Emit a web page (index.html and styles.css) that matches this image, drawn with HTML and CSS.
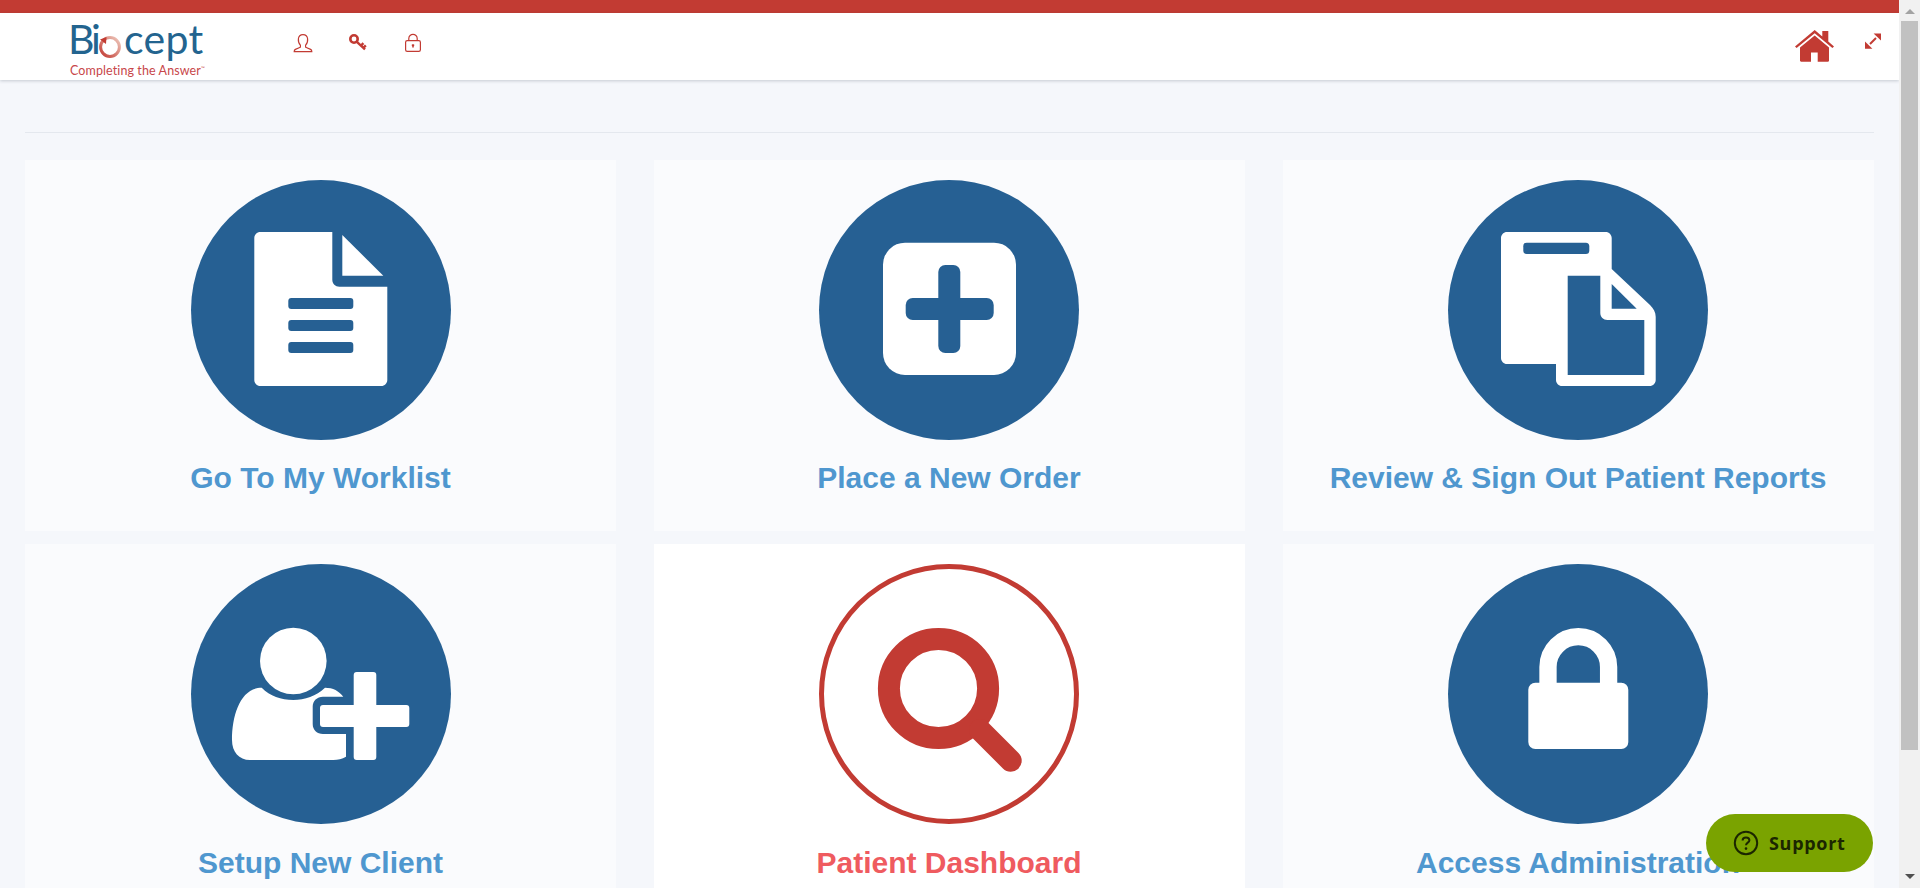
FILE: index.html
```html
<!DOCTYPE html>
<html>
  <head>
    <title>Biocept</title>
    <meta name="viewport" content="width=device-width, initial-scale=1" />
    <link rel="stylesheet" href="styles.css">
  </head>
  <body>
    <div class="page">
      <div class="top-strip"></div>
      <header class="header">
        <a class="logo" href="#">
          <span class="logo-name"><span class="logo-bi">Bi</span><svg class="logo-o" viewBox="0 0 22 22">
              <defs>
                <linearGradient id="ring" x1="0" y1="1" x2="1" y2="0">
                  <stop offset="0" stop-color="#c23b33" />
                  <stop offset="1" stop-color="#eec9bd" />
                </linearGradient>
              </defs>
              <circle cx="11" cy="11" r="9.4" fill="none" stroke="url(#ring)" stroke-width="3" />
              <path d="M1 3.5 L7.5 1 L7 8 Z" fill="#c23b33" />
            </svg><span class="logo-cept">cept</span></span>
          <span class="logo-tag">Completing the Answer<sup>™</sup></span>
        </a>
        <nav class="tools">
          <a href="#" class="tool">
            <svg viewBox="0 0 20 20" width="20" height="20" fill="none" stroke="#c23b33" stroke-width="1.2">
              <path d="M7.4 12.2 C5.6 10.4 5.2 7.8 5.4 5.8 C5.7 3 7.6 1.6 10 1.6 C12.4 1.6 14.3 3 14.6 5.8 C14.8 7.8 14.4 10.4 12.6 12.2 L12.6 14.2 L17.6 16.4 C18.6 16.9 18.8 17.6 18.8 18.6 L1.2 18.6 C1.2 17.6 1.4 16.9 2.4 16.4 L7.4 14.2 Z" />
            </svg>
          </a>
          <a href="#" class="tool">
            <svg viewBox="0 0 20 20" width="20" height="20" fill="none" stroke="#c23b33">
              <circle cx="6" cy="6" r="3.7" stroke-width="2.6" />
              <path d="M8.6 8.6 L17 16.4 M13 12.6 L15.4 10.2 M15.4 14.8 L17.8 12.4" stroke-width="2.4" />
            </svg>
          </a>
          <a href="#" class="tool">
            <svg viewBox="0 0 20 20" width="20" height="20" fill="none" stroke="#c23b33" stroke-width="1.2">
              <rect x="2.6" y="7.6" width="14.8" height="10.8" rx="1.6" />
              <path d="M5.8 7.6 V5.4 C5.8 3 7.8 1.4 10 1.4 C12.2 1.4 14.2 3 14.2 5.4 V7.6" />
              <path d="M10 11.2 V14.6 M8.8 12.2 H11.2" stroke-width="1.6" />
            </svg>
          </a>
        </nav>
        <a href="#" class="home">
          <svg viewBox="0 0 39 32" width="39" height="32" fill="#c23b33">
            <path d="M19.7 0 L27.3 6.4 V1 H33.3 V11.5 L39 16.4 L37.4 18 L19.7 3.2 L1.6 18 L0 16.4 Z" />
            <path d="M19.7 5.6 L34 17.6 V30.6 C34 31.4 33.6 31.8 32.8 31.8 H22.7 V22.4 H16 V31.8 H6.2 C5.4 31.8 5 31.4 5 30.6 V17.6 Z" />
          </svg>
        </a>
        <a href="#" class="expand">
          <svg viewBox="0 0 16 16" width="16" height="16" fill="#c23b33">
            <path d="M8.6 0.4 H16 V7.6 Z" />
            <path d="M0 8.4 V15.8 H7.4 Z" />
            <path d="M5 11 L11 5" stroke="#c23b33" stroke-width="2" />
          </svg>
        </a>
      </header>

      <main class="content">
        <hr class="rule" />
        <div class="tiles">
          <a href="#" class="tile">
            <svg class="tile-icon" viewBox="0 0 260 260">
              <circle cx="130" cy="130" r="130" fill="#266093" />
              <path fill="#fff" d="M69.3 52 H141.3 V99.7 C141.3 103.6 144.4 106.7 148.3 106.7 H196.3 V200 C196.3 203.3 193.6 206 190.3 206 H69.3 C66 206 63.3 203.3 63.3 200 V58 C63.3 54.7 66 52 69.3 52 Z" />
              <path fill="#fff" d="M151.3 55 L192.3 95.7 H151.3 Z" />
              <rect x="97.3" y="118" width="65" height="11" rx="3" fill="#266093" />
              <rect x="97.3" y="140" width="65" height="11" rx="3" fill="#266093" />
              <rect x="97.3" y="162" width="65" height="11" rx="3" fill="#266093" />
            </svg>
            <span class="tile-title">Go To My Worklist</span>
          </a>
          <a href="#" class="tile">
            <svg class="tile-icon" viewBox="0 0 260 260">
              <circle cx="130" cy="130" r="130" fill="#266093" />
              <rect x="64" y="62.7" width="133" height="132.3" rx="22" fill="#fff" />
              <rect x="119.3" y="85" width="22" height="88" rx="7" fill="#266093" />
              <rect x="86.7" y="118" width="88" height="22" rx="7" fill="#266093" />
            </svg>
            <span class="tile-title">Place a New Order</span>
          </a>
          <a href="#" class="tile">
            <svg class="tile-icon" viewBox="0 0 260 260">
              <circle cx="130" cy="130" r="130" fill="#266093" />
              <path fill="#fff" d="M59 52 H157.7 C161 52 163.7 54.7 163.7 58 V89 L202 125 C205.5 128.5 207.7 132 207.7 136.7 V200 C207.7 203.3 205 206 201.7 206 H114 C110.7 206 108 203.3 108 200 V184 H59 C55.7 184 53 181.3 53 178 V58 C53 54.7 55.7 52 59 52 Z" />
              <rect x="75.3" y="62.7" width="66" height="11.3" rx="3.5" fill="#266093" />
              <path fill="#266093" d="M119.7 95.7 H152.3 V133 C152.3 136.9 155.4 140 159.3 140 H196.3 V195 H119.7 Z" />
              <path fill="#266093" d="M163.7 104 L188.7 128.7 H163.7 Z" />
            </svg>
            <span class="tile-title">Review &amp; Sign Out Patient Reports</span>
          </a>
          <a href="#" class="tile">
            <svg class="tile-icon" viewBox="0 0 260 260">
              <circle cx="130" cy="130" r="130" fill="#266093" />
              <circle cx="102.3" cy="97" r="33.3" fill="#fff" />
              <path fill="#fff" d="M70.7 123.7 C79 132 90 136 102.3 136 C114 136 125 132 134 123.7 C142 123.7 148 127 152.3 132.7 H132 C126 132.7 121.7 137 121.7 142.7 V160 C121.7 166 126 170 132 170 H155 V192.7 C151 195 147 196 142.3 196 H59 C48 196 41 188 41 176 C41 150 50 123.7 70.7 123.7 Z" />
              <rect x="162.7" y="108" width="22.6" height="88" rx="3" fill="#fff" />
              <rect x="129" y="141" width="89.3" height="22" rx="3" fill="#fff" />
            </svg>
            <span class="tile-title">Setup New Client</span>
          </a>
          <a href="#" class="tile tile-active">
            <svg class="tile-icon" viewBox="0 0 260 260">
              <circle cx="130" cy="130" r="127.5" fill="#fff" stroke="#c23b33" stroke-width="5" />
              <circle cx="119.5" cy="124.5" r="49.6" fill="none" stroke="#c23b33" stroke-width="22" />
              <path d="M161 166 L191.7 196.7" fill="none" stroke="#c23b33" stroke-width="22" stroke-linecap="round" />
            </svg>
            <span class="tile-title">Patient Dashboard</span>
          </a>
          <a href="#" class="tile">
            <svg class="tile-icon" viewBox="0 0 260 260">
              <circle cx="130" cy="130" r="130" fill="#266093" />
              <path d="M100 122 V103 A30.3 30.3 0 0 1 160.6 103 V122" fill="none" stroke="#fff" stroke-width="17.3" />
              <rect x="80.3" y="118.7" width="100" height="66.3" rx="7" fill="#fff" />
            </svg>
            <span class="tile-title">Access Administration</span>
          </a>
        </div>
      </main>

      <button class="support" type="button">
        <svg viewBox="0 0 26 26" width="26" height="26" fill="none" stroke="#1b2600">
          <circle cx="13" cy="13" r="11.2" stroke-width="2" />
          <path d="M9.6 10.4 C9.6 8.4 11 7.4 13 7.4 C15 7.4 16.4 8.5 16.4 10.2 C16.4 12.6 13 12.6 13 15.2" stroke-width="2" />
          <circle cx="13" cy="18.6" r="1.3" fill="#1b2600" stroke="none" />
        </svg>
        Support
      </button>
    </div>

    <div class="scrollbar">
      <div class="arrow-up"></div>
      <div class="thumb"></div>
      <div class="arrow-down"></div>
    </div>
  </body>
</html>
```

FILE: styles.css
```css
* {
  box-sizing: border-box;
}

html, body {
  height: 100%;
}

body {
  display: flex;
  margin: 0;
  overflow: hidden;
  background-color: #f5f7fb;
  font-family: "Liberation Sans", Arial, sans-serif;
}

a {
  text-decoration: none;
}

.page {
  position: relative;
  flex: 1;
  min-width: 0;
  height: 888px;
  overflow: hidden;
}

.top-strip {
  height: 13px;
  background-color: #c23b33;
}

.header {
  display: flex;
  align-items: flex-start;
  height: 67px;
  padding-left: 68px;
  background-color: #fff;
  box-shadow: 0 1px 3px rgba(60, 70, 90, 0.25);
}

.logo {
  display: flex;
  flex-direction: column;
  width: 203px;
  padding-top: 5px;
  font-family: Lato, sans-serif;
}

.logo-name {
  display: flex;
  align-items: flex-end;
  height: 42px;
  font-size: 41px;
  line-height: 42px;
  color: #23648f;
}

.logo-bi {
  letter-spacing: -3px;
}

.logo-cept {
  letter-spacing: 0.3px;
}

.logo-o {
  flex: none;
  width: 22px;
  height: 22px;
  margin: 0 3px 2px 1px;
}

.logo-tag {
  margin: 4px 0 0 2px;
  font-size: 12.5px;
  line-height: 14px;
  letter-spacing: 0.1px;
  color: #c8474a;
  white-space: nowrap;
}

.logo-tag sup {
  font-size: 5px;
  line-height: 0;
}

.tools {
  display: flex;
  gap: 35px;
  padding: 20px 0 0 22px;
}

.tool {
  display: block;
  width: 20px;
  height: 20px;
}

.home {
  margin-left: auto;
  margin-top: 17px;
}

.expand {
  margin: 20px 18px 0 31px;
}

.content {
  padding: 52px 25px 0;
}

.rule {
  height: 1px;
  margin: 0;
  border: 0;
  background-color: #e4e8ee;
}

.tiles {
  display: grid;
  grid-template-columns: repeat(3, 591px);
  column-gap: 38px;
  row-gap: 13px;
  margin-top: 27px;
}

.tile {
  display: flex;
  flex-direction: column;
  align-items: center;
  height: 371px;
  padding-top: 20px;
  background-color: #fafbfd;
}

.tile:not(:nth-child(3n+1)) {
  padding-right: 1px;
}

.tile-active {
  background-color: #fff;
}

.tile-icon {
  flex: none;
  width: 260px;
  height: 260px;
}

.tile-title {
  margin-top: 19px;
  font-size: 30px;
  font-weight: bold;
  line-height: 38px;
  color: #4f97cf;
  white-space: nowrap;
}

.tile:nth-child(n+4) .tile-title {
  margin-top: 20px;
}

.tile-active .tile-title {
  color: #ef5b5f;
}

.support {
  position: absolute;
  right: 26px;
  bottom: 16px;
  display: flex;
  align-items: center;
  gap: 10px;
  width: 167px;
  height: 58px;
  padding: 0 0 0 27px;
  border: 0;
  border-radius: 29px;
  background-color: #7aa300;
  font-family: "Open Sans", sans-serif;
  font-size: 18px;
  font-weight: 700;
  letter-spacing: 0.7px;
  color: #1b2600;
}

.scrollbar {
  position: relative;
  flex: none;
  width: 21px;
  height: 888px;
  background-color: #f1f1f1;
}

.thumb {
  position: absolute;
  top: 21px;
  left: 2px;
  width: 17px;
  height: 729px;
  background-color: #c1c1c1;
}

.arrow-up, .arrow-down {
  position: absolute;
  left: 6px;
  width: 0;
  height: 0;
  border-left: 5px solid transparent;
  border-right: 5px solid transparent;
}

.arrow-up {
  top: 9px;
  border-bottom: 5px solid #a3a3a3;
}

.arrow-down {
  bottom: 9px;
  border-top: 5px solid #505050;
}
```
